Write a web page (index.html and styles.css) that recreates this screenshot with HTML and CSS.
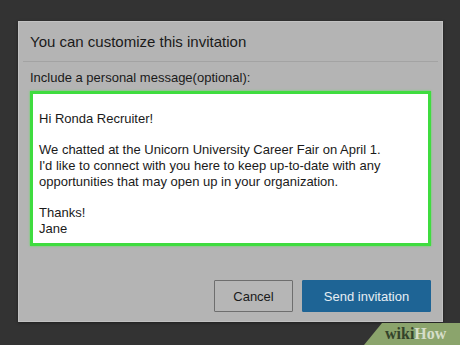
FILE: index.html
```html
<!DOCTYPE html>
<html lang="en">
<head>
    <meta charset="UTF-8">
    <title>Customize invitation</title>
    <link rel="stylesheet" href="styles.css">
</head>
<body>
    <div class="dialog">
        <!-- Header -->
        <div class="dialog-header">You can customize this invitation</div>

        <!-- Message -->
        <div class="dialog-body">
            <div class="label">Include a personal message(optional):</div>
            <div class="message">
                <p>Hi Ronda Recruiter!</p>
                <p>We chatted at the Unicorn University Career Fair on April 1.<br>I'd like to connect with you here to keep up-to-date with any<br>opportunities that may open up in your organization.</p>
                <p>Thanks!<br>Jane</p>
            </div>
        </div>

        <!-- Buttons -->
        <div class="dialog-actions">
            <button class="btn btn-cancel">Cancel</button>
            <button class="btn btn-send">Send invitation</button>
        </div>
    </div>

    <div class="badge"><span class="wiki">wiki</span><span class="how">How</span></div>
</body>
</html>
```
FILE: styles.css
```css
* {
    margin: 0;
    padding: 0;
    box-sizing: border-box;
}

body {
    background: #333333;
    font-family: "Liberation Sans", Arial, sans-serif;
    color: #1a1a1a;
    width: 460px;
    height: 345px;
    overflow: hidden;
    padding: 21px 0 0 18px;
    position: relative;
}

/* Dialog box */
.dialog {
    width: 425px;
    height: 301px;
    background: #b4b4b4;
    border: 1px solid #c2c2c2;
    box-shadow: 0 1px 3px rgba(0, 0, 0, 0.4);
    display: flex;
    flex-direction: column;
}

.dialog-header {
    font-size: 15px;
    height: 40px;
    padding: 11px 0 0 7px;
    margin: 0 4px;
    border-bottom: 1px solid #a3a3a3;
}

.dialog-body {
    padding: 8px 11px 0 11px;
}

.label {
    font-size: 13px;
    height: 21px;
}

.message {
    height: 155px;
    background: #ffffff;
    border: 3px solid #3fdc3f;
    box-shadow: 0 0 2px #58e458;
    padding: 17px 6px 0 6px;
    font-size: 13px;
    line-height: 15.7px;
}

.message p {
    margin-bottom: 15.7px;
}

/* Buttons */
.dialog-actions {
    margin-top: auto;
    display: flex;
    justify-content: flex-end;
    gap: 9px;
    padding: 0 11px 9px 0;
}

.btn {
    height: 32px;
    font-family: "Liberation Sans", Arial, sans-serif;
    font-size: 13px;
    border-radius: 1px;
}

.btn-cancel {
    width: 79px;
    background: #b6b6b6;
    border: 1px solid #6e6e6e;
    color: #1a1a1a;
}

.btn-send {
    width: 129px;
    background: #1e6495;
    border: 1px solid #1e6495;
    color: #e6eef4;
}

/* wikiHow badge */
.badge {
    position: absolute;
    right: 0;
    bottom: 0;
    width: 96px;
    height: 22px;
    background: #8ba46c;
    clip-path: polygon(18px 0, 100% 0, 100% 100%, 0 100%);
    font-family: "Liberation Serif", serif;
    font-weight: bold;
    font-size: 16px;
    line-height: 22px;
    padding-left: 21px;
    white-space: nowrap;
}

.wiki {
    color: #34432a;
}

.how {
    color: #d6dec9;
}
```
